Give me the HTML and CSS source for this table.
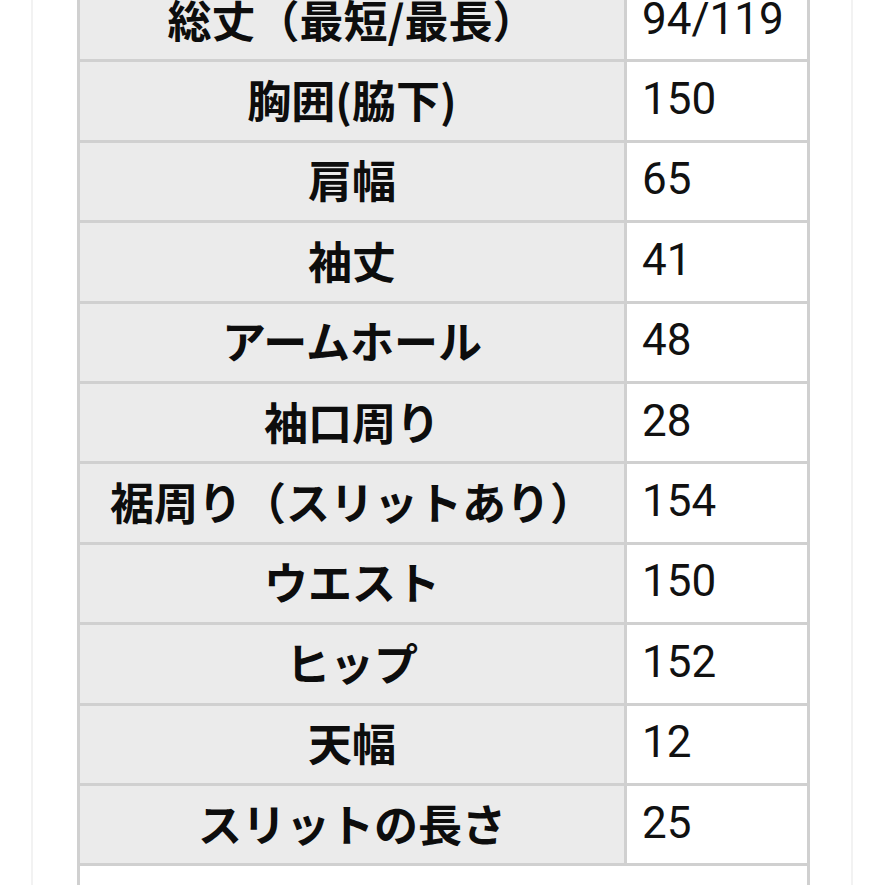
FILE: index.html
```html
<!DOCTYPE html>
<html lang="ja">
<head>
<meta charset="utf-8">
<title>サイズ表</title>
<link rel="stylesheet" href="styles.css">
</head>
<body>
<div class="panel">
  <div class="sizes">
    <div class="label">総丈（最短/最長）</div><div class="value">94/119</div>
    <div class="label">胸囲(脇下)</div><div class="value">150</div>
    <div class="label">肩幅</div><div class="value">65</div>
    <div class="label">袖丈</div><div class="value">41</div>
    <div class="label">アームホール</div><div class="value">48</div>
    <div class="label">袖口周り</div><div class="value">28</div>
    <div class="label">裾周り（スリットあり）</div><div class="value">154</div>
    <div class="label">ウエスト</div><div class="value">150</div>
    <div class="label">ヒップ</div><div class="value">152</div>
    <div class="label">天幅</div><div class="value">12</div>
    <div class="label">スリットの長さ</div><div class="value">25</div>
    <div class="note"></div>
  </div>
</div>
</body>
</html>
```
FILE: styles.css
```css
html, body {
  margin: 0;
  padding: 0;
  background: #ffffff;
  height: 100%;
  overflow: hidden;
}

.panel {
  margin: 0 32px 0 31px;
  border-left: 2px solid #f2f2f2;
  border-right: 2px solid #f2f2f2;
  padding: 0 41px 0 44px;
  min-height: 100%;
}

.sizes {
  margin-top: -21px;
  display: grid;
  grid-template-columns: 544px 180px;
  grid-auto-rows: 77.4px;
  gap: 3px;
  padding: 3px;
  background: #d0d0d0;
}

.label {
  background: #ebebeb;
  display: flex;
  align-items: center;
  justify-content: center;
  font-family: "Noto Sans CJK JP", "Noto Sans", sans-serif;
  font-weight: 700;
  font-size: 44px;
  line-height: 1;
  color: #0d0d0d;
  padding-bottom: 4px;
  box-sizing: border-box;
}

.value {
  background: #ffffff;
  display: flex;
  align-items: center;
  padding: 0 0 4px 15px;
  box-sizing: border-box;
  font-family: Roboto, "Liberation Sans", sans-serif;
  font-weight: 400;
  font-size: 44px;
  line-height: 1;
  color: #111111;
}

.note {
  grid-column: 1 / 3;
  background: #ffffff;
}
```
